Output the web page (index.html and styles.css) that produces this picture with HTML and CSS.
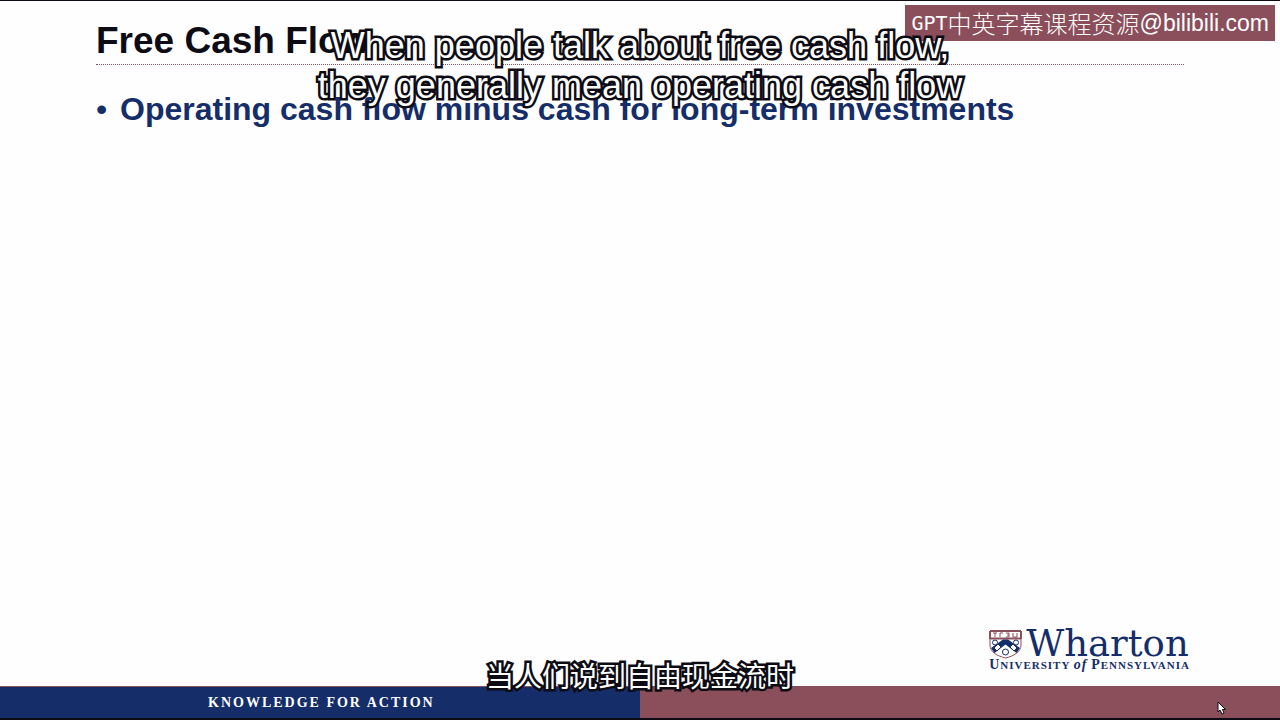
FILE: index.html
```html
<!DOCTYPE html>
<html lang="en">
<head>
<meta charset="utf-8">
<title>Free Cash Flow</title>
<link rel="stylesheet" href="styles.css">
</head>
<body>
<main class="slide">
  <header class="slide-header">
    <h1 class="title">Free Cash Flow</h1>
  </header>
  <ul class="points">
    <li class="point"><span class="bullet">•</span><span>Operating cash flow minus cash for long-term investments</span></li>
  </ul>
  <div class="brand">
    <div class="brand-top">
      <svg class="shield" viewBox="0 0 33 29" aria-hidden="true">
        <path class="shield-body" d="M1 1H32V15C32 22 25 26 16.500 28C8 26 1 22 1 15Z"/>
        <path class="shield-chief" d="M1 1H32M1 8.500H32M1 1V9M32 1V9"/>
        <path class="shield-marks" d="M4 3H8M6 3V7M11 7V3H14M17 3H20V5H18M20 5V7H17M24 3V7H28V3"/>
        <path class="shield-chevron" d="M2 18L14 9.500H19L31 18L27.500 23L16.500 14.500L5.500 23Z"/>
        <path class="shield-disc" d="M5 18L9 14L12 17L8 21ZM28 18L24 14L21 17L25 21Z"/>
        <circle class="shield-disc" cx="6" cy="12.500" r="2.500"/>
        <circle class="shield-disc" cx="27" cy="12.500" r="2.500"/>
        <circle class="shield-disc" cx="16.500" cy="22" r="3"/>
      </svg>
      <span class="brand-name">Wharton</span>
    </div>
    <div class="brand-school"><span class="cap">U</span>NIVERSITY <i class="of">of</i> <span class="cap">P</span>ENNSYLVANIA</div>
  </div>
  <footer class="slide-footer">
    <div class="motto">KNOWLEDGE FOR ACTION</div>
    <div class="footer-accent"></div>
  </footer>
</main>
<div class="watermark"><span class="mark-code">GPT</span><span class="mark-name" lang="zh">中英字幕课程资源</span><span>@bilibili.com</span></div>
<p class="caption caption-top">When people talk about free cash flow,<br>they generally mean operating cash flow</p>
<p class="caption caption-bottom" lang="zh">当人们说到自由现金流时</p>
<svg class="cursor" viewBox="0 0 9 14" aria-hidden="true"><path d="M1 1V11L3 9L5 13L7 12L5.500 8.500H8.500Z"/></svg>
</body>
</html>
```
FILE: styles.css
```css
* { box-sizing: border-box; }
body {
  position: relative;
  margin: 0;
  font-family: "Liberation Sans", Arial, sans-serif;
  background: #fefefe;
  color: #0d0c14;
}
.slide {
  display: flex;
  flex-direction: column;
  min-height: 100vh;
  border-top: 1px solid #0d0c14;
  border-bottom: 2px solid #0d0c14;
}
.slide-header {
  margin: 0 96px;
  padding-top: 16px;
  border-bottom: 1px dotted #8b4f5b;
}
.title {
  margin: 0;
  font-size: 37px;
  line-height: 47px;
  font-weight: bold;
}
.points {
  flex: 1;
  margin: 0 96px;
  padding: 24px 0 0;
  list-style: none;
}
.point {
  display: flex;
  font-size: 32px;
  line-height: 40px;
  font-weight: bold;
  color: #152d68;
}
.bullet { width: 24px; font-weight: normal; }
.brand {
  align-self: flex-end;
  margin: 0 90px 14px 0;
  color: #152d68;
  font-family: "Liberation Serif", "Times New Roman", serif;
}
.brand-top {
  display: flex;
  gap: 4px;
  align-items: center;
  height: 28px;
}
.shield { width: 33px; height: 29px; }
.shield-body { fill: #fefefe; stroke: #8b4f5b; }
.shield-chief { fill: none; stroke: #8b4f5b; stroke-width: 2; }
.shield-marks { fill: none; stroke: #8b4f5b; }
.shield-chevron { fill: #152d68; }
.shield-disc { fill: #fefefe; stroke: #152d68; }
.brand-name { font: 37px/28px "DejaVu Serif", serif; }
.brand-school {
  font-size: 11px;
  line-height: 14px;
  font-weight: bold;
  letter-spacing: 1px;
  white-space: nowrap;
}
.cap, .of { font-size: 14px; }
.slide-footer {
  display: grid;
  grid-template-columns: 1fr 1fr;
}
.motto {
  padding-left: 208px;
  border-top: 1px solid #8b4f5b;
  background: #152d68;
  color: #fefefe;
  font: bold 14px/31px "Liberation Serif", "Times New Roman", serif;
  letter-spacing: 2px;
  white-space: nowrap;
}
.footer-accent { background: #8b4f5b; }
.watermark {
  position: absolute;
  top: 5px;
  right: 5px;
  display: flex;
  align-items: center;
  height: 36px;
  padding: 0 6px;
  background: #8b4f5b;
  color: #fefefe;
  font-size: 23px;
  line-height: 36px;
  white-space: nowrap;
}
.mark-code { font-family: "DejaVu Sans Mono", monospace; font-size: 20px; }
.mark-name { font-family: "Noto Sans CJK SC", sans-serif; font-size: 24px; font-weight: 300; }
.caption {
  position: absolute;
  left: 0;
  right: 0;
  margin: 0;
  text-align: center;
  color: #fefefe;
  -webkit-text-stroke: 5px #0d0c14;
  paint-order: stroke fill;
}
.caption-top { top: 26px; font-size: 36px; line-height: 40px; }
.caption-bottom {
  bottom: 25px;
  font: 28px/40px "Noto Sans CJK SC", sans-serif;
}
.cursor {
  position: absolute;
  right: 54px;
  bottom: 5px;
  width: 9px;
  height: 14px;
  fill: #fefefe;
  stroke: #0d0c14;
}
```
